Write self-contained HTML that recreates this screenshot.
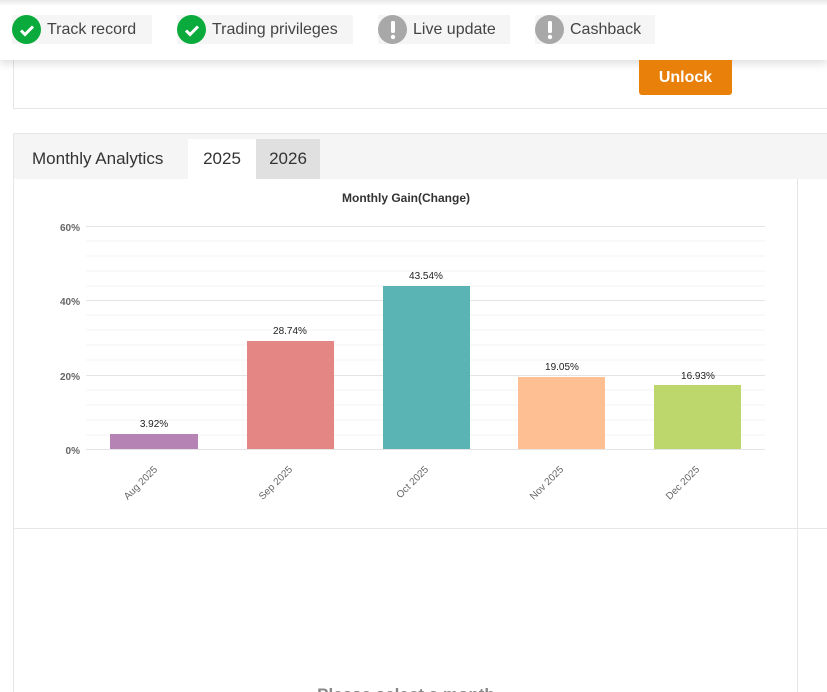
<!DOCTYPE html><html style="overflow:hidden;height:692px"><head><style>
body{margin:0;width:827px;height:692px;overflow:hidden;background:#fff;font-family:"Liberation Sans",sans-serif;position:relative}
.abs{position:absolute}
.badge{position:absolute;top:15px;height:29px;background:#f5f5f5;display:flex;align-items:center;font-size:16px;color:#444}
.ic{width:29px;height:29px;border-radius:50%;margin-right:6px;display:flex;align-items:center;justify-content:center}
</style></head><body>
<div class="abs" style="left:13px;top:40px;width:813px;height:67px;border:1px solid #e6e6e6;border-right:none;background:#fff"></div>
<div class="abs" style="left:0;top:0;width:827px;height:60px;background:#fff;box-shadow:0 4px 8px rgba(0,0,0,0.12)"></div>
<div class="abs" style="left:0;top:0;width:827px;height:6px;background:linear-gradient(#e8e8e8,#fff)"></div>
<div class="badge" style="left:12px;width:140px"><div class="ic" style="background:#0aab3c"><svg width="18" height="18" viewBox="0 0 18 18"><path d="M3 9.5l4 4 8-8" stroke="#fff" stroke-width="3" fill="none"/></svg></div>Track record</div>
<div class="badge" style="left:177px;width:176px"><div class="ic" style="background:#0aab3c"><svg width="18" height="18" viewBox="0 0 18 18"><path d="M3 9.5l4 4 8-8" stroke="#fff" stroke-width="3" fill="none"/></svg></div>Trading privileges</div>
<div class="badge" style="left:378px;width:132px"><div class="ic" style="background:#a8a8a8"><svg width="18" height="22" viewBox="0 0 18 22"><rect x="7" y="2" width="4" height="12" rx="1.5" fill="#fff"/><circle cx="9" cy="18" r="2.2" fill="#fff"/></svg></div>Live update</div>
<div class="badge" style="left:535px;width:120px"><div class="ic" style="background:#a8a8a8"><svg width="18" height="22" viewBox="0 0 18 22"><rect x="7" y="2" width="4" height="12" rx="1.5" fill="#fff"/><circle cx="9" cy="18" r="2.2" fill="#fff"/></svg></div>Cashback</div>
<div class="abs" style="left:639px;top:60px;width:93px;height:35px;background:#e8800a;border-radius:0 0 3px 3px;color:#fff;font-weight:bold;font-size:16px;display:flex;align-items:center;justify-content:center">Unlock</div>
<div class="abs" style="left:13px;top:133px;width:813px;height:560px;border:1px solid #e6e6e6;border-right:none;background:#fff"></div>
<div class="abs" style="left:14px;top:134px;width:813px;height:45px;background:#f5f5f5"></div>
<div class="abs" style="left:32px;top:149px;font-size:17px;color:#333">Monthly Analytics</div>
<div class="abs" style="left:188px;top:139px;width:68px;height:40px;background:#fff;font-size:17px;color:#333;text-align:center;line-height:40px">2025</div>
<div class="abs" style="left:256px;top:139px;width:64px;height:40px;background:#e0e0e0;font-size:17px;color:#333;text-align:center;line-height:40px">2026</div>
<div class="abs" style="left:797px;top:179px;width:1px;height:513px;background:#e6e6e6"></div>
<div class="abs" style="left:14px;top:528px;width:813px;height:1px;background:#e6e6e6"></div>
<svg class="abs" style="left:0;top:0" width="827" height="692">
<g stroke="#f3f3f3"><path d="M86 241H765M86 256H765M86 271H765M86 286H765M86 315H765M86 330H765M86 345H765M86 360H765M86 390H765M86 405H765M86 420H765M86 435H765"/></g>
<g stroke="#e4e4e4"><path d="M86 226.5H765M86 300.5H765M86 375.5H765M86 449.5H765"/></g>
<g font-size="10" fill="#666" text-anchor="end" font-weight="bold"><text x="80" y="231">60%</text><text x="80" y="305">40%</text><text x="80" y="380">20%</text><text x="80" y="454">0%</text></g>
<text x="406" y="202" text-anchor="middle" font-size="12" font-weight="bold" fill="#333">Monthly Gain(Change)</text>
<rect x="110" y="434" width="88" height="15" fill="#b684b4"/>
<rect x="247" y="341" width="87" height="108" fill="#e38684"/>
<rect x="383" y="286" width="87" height="163" fill="#5ab4b4"/>
<rect x="518" y="377" width="87" height="72" fill="#fec093"/>
<rect x="654" y="385" width="87" height="64" fill="#bed76d"/>
<g font-size="10" fill="#222" text-anchor="middle"><text x="154" y="427">3.92%</text><text x="290" y="334">28.74%</text><text x="426" y="279">43.54%</text><text x="562" y="370">19.05%</text><text x="698" y="379">16.93%</text></g>
<g font-size="10" fill="#666" text-anchor="end">
<text transform="translate(158,470) rotate(-45)">Aug 2025</text>
<text transform="translate(293,470) rotate(-45)">Sep 2025</text>
<text transform="translate(429,470) rotate(-45)">Oct 2025</text>
<text transform="translate(564,470) rotate(-45)">Nov 2025</text>
<text transform="translate(700,470) rotate(-45)">Dec 2025</text></g>
<text x="406" y="700" text-anchor="middle" font-size="17" font-weight="bold" fill="#888">Please select a month</text>
</svg>
</body></html>
